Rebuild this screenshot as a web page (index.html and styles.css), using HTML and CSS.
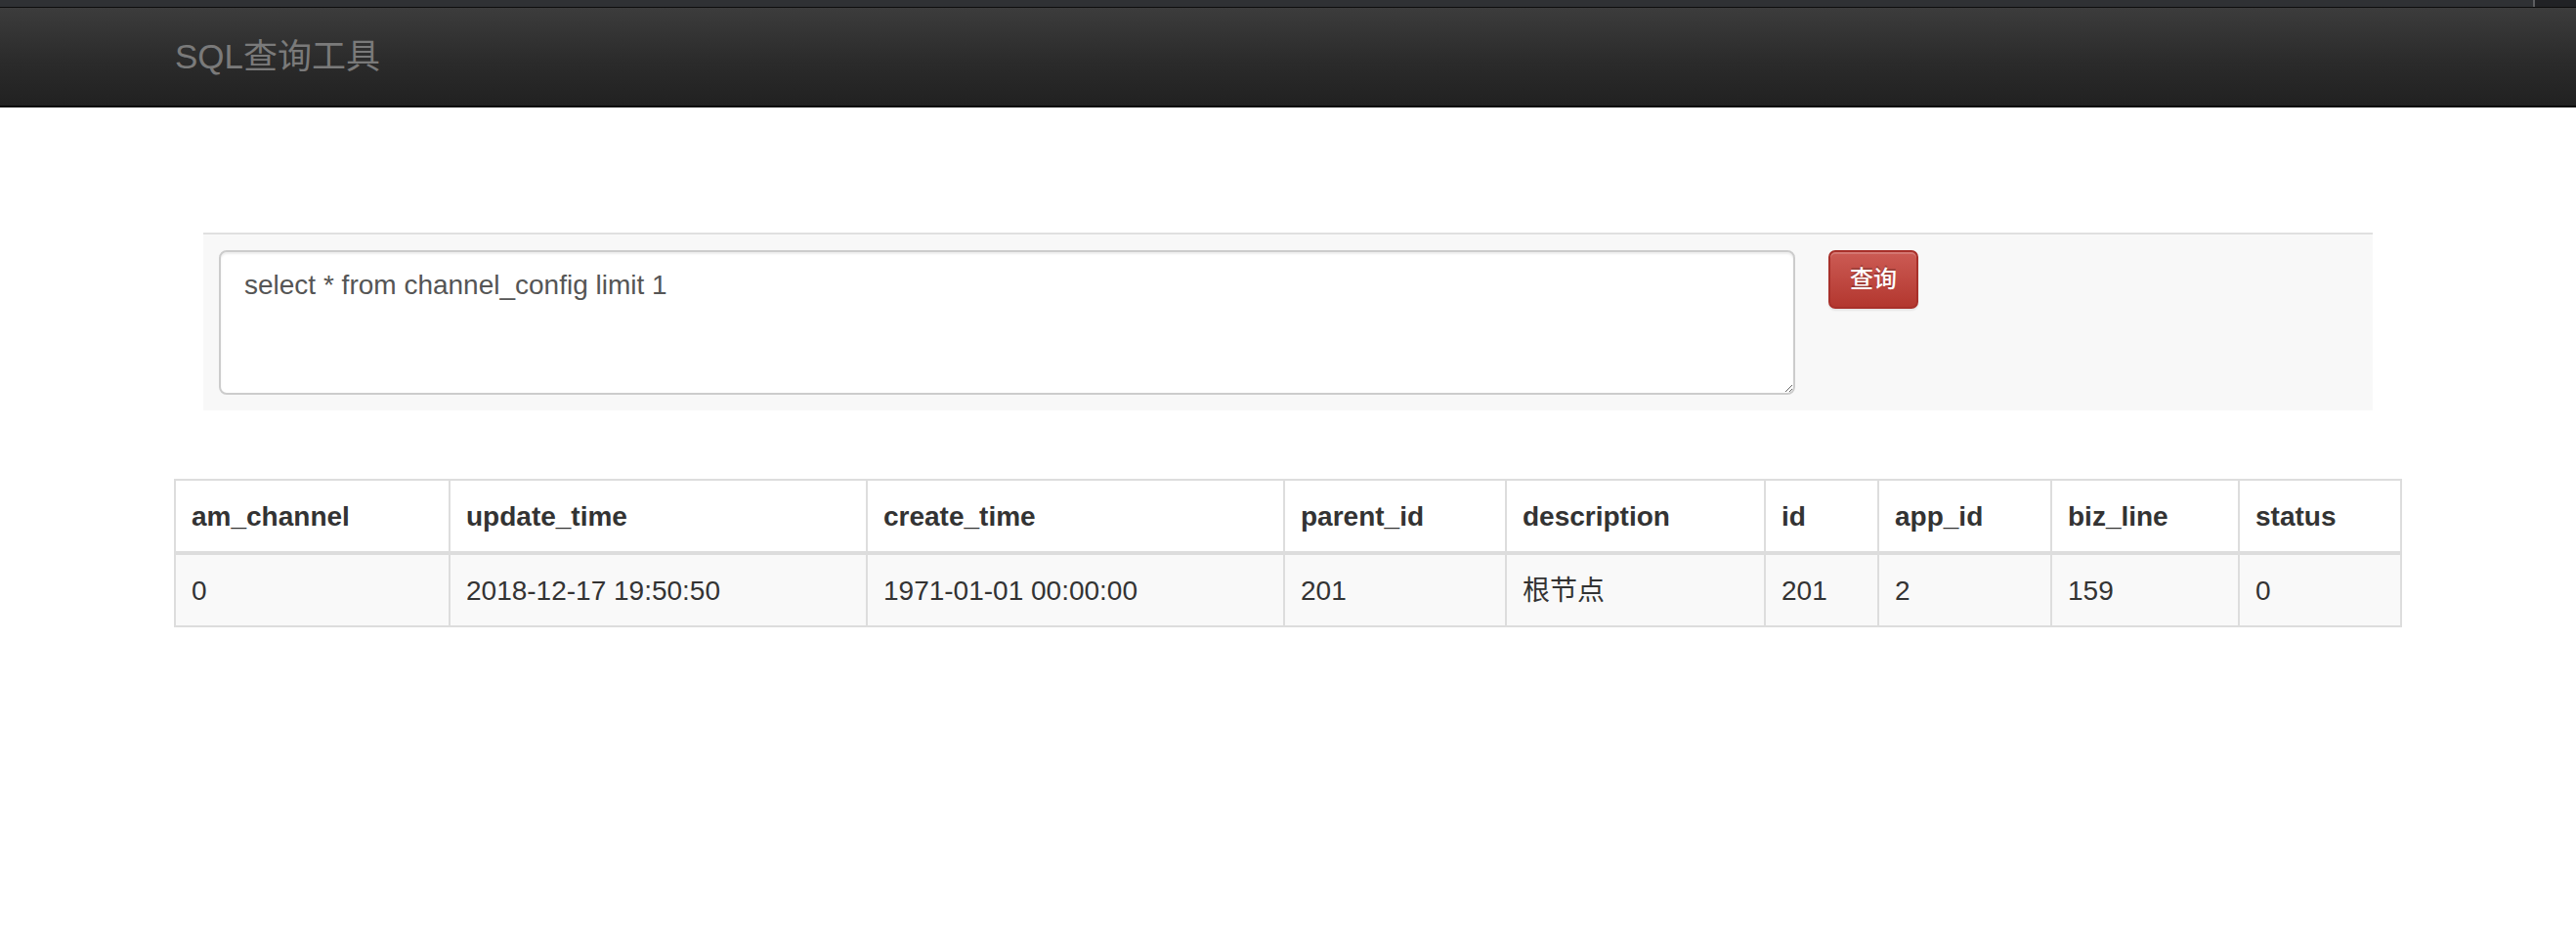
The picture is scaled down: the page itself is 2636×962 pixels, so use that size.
FILE: index.html
```html
<!DOCTYPE html>
<html lang="zh-CN">
<head>
<meta charset="utf-8">
<title>SQL查询工具</title>
<link rel="stylesheet" href="styles.css">
</head>
<body>
<div class="topstrip">
  <div class="topstrip-main"></div>
  <div class="topstrip-divider"></div>
  <div class="topstrip-side"></div>
</div>
<header class="navbar">
  <div class="container">
    <span class="brand">SQL查询工具</span>
  </div>
</header>
<main class="container page">
  <form class="query-panel">
    <textarea class="query-input">select * from channel_config limit 1</textarea>
    <button type="button" class="btn-query">查询</button>
  </form>
  <table class="result-table">
    <thead>
      <tr>
        <th>am_channel</th>
        <th>update_time</th>
        <th>create_time</th>
        <th>parent_id</th>
        <th>description</th>
        <th>id</th>
        <th>app_id</th>
        <th>biz_line</th>
        <th>status</th>
      </tr>
    </thead>
    <tbody>
      <tr>
        <td>0</td>
        <td>2018-12-17 19:50:50</td>
        <td>1971-01-01 00:00:00</td>
        <td>201</td>
        <td>根节点</td>
        <td>201</td>
        <td>2</td>
        <td>159</td>
        <td>0</td>
      </tr>
    </tbody>
  </table>
</main>
</body>
</html>
```

FILE: styles.css
```css
* { box-sizing: border-box; }

html, body {
  margin: 0;
  padding: 0;
  background: #ffffff;
  font-family: "Liberation Sans", "Noto Sans CJK SC", Arial, sans-serif;
  color: #333333;
}

.topstrip {
  display: flex;
  height: 8px;
  border-bottom: 1px solid #0d0d0d;
  background: #2f3134;
}
.topstrip-main { flex: 1; }
.topstrip-divider { width: 2px; background: #5c5d60; }
.topstrip-side { width: 42px; background: #212225; }

.navbar {
  height: 102px;
  background: linear-gradient(to bottom, #3c3c3c 0%, #2b2b2b 55%, #212121 100%);
  border-bottom: 2px solid #0a0a0a;
}

.container {
  width: 2280px;
  margin: 0 auto;
}

.brand {
  display: block;
  padding-left: 1px;
  padding-top: 1px;
  font-size: 35px;
  line-height: 98px;
  color: #7a7a7a;
  font-family: "Liberation Sans", "Noto Sans CJK SC", Arial, sans-serif;
}

.page {
  padding-top: 128px;
}

.query-panel {
  display: flex;
  align-items: flex-start;
  gap: 34px;
  margin: 0 30px 70px;
  padding: 16px;
  background: #f8f8f8;
  border-top: 2px solid #e0e0e0;
}

.query-input {
  display: block;
  width: 1613px;
  height: 148px;
  margin: 0;
  padding: 14px 24px 10px;
  font-family: "Liberation Sans", "Noto Sans CJK SC", Arial, sans-serif;
  font-size: 28px;
  line-height: 40px;
  color: #555555;
  background: #ffffff;
  border: 2px solid #cccccc;
  border-radius: 8px;
  box-shadow: inset 0 2px 2px rgba(0, 0, 0, 0.075);
  resize: vertical;
  outline: none;
}

.btn-query {
  width: 92px;
  height: 60px;
  padding: 0;
  font-family: "Liberation Sans", "Noto Sans CJK SC", Arial, sans-serif;
  font-size: 24px;
  font-weight: 500;
  line-height: 36px;
  color: #ffffff;
  text-shadow: 0 -2px 0 rgba(0, 0, 0, 0.2);
  background: linear-gradient(to bottom, #cc5b54 0%, #b3372f 100%);
  border: 2px solid #a8302a;
  border-radius: 7px;
  box-shadow: inset 0 2px 0 rgba(255, 255, 255, 0.18), 0 2px 2px rgba(0, 0, 0, 0.08);
  cursor: pointer;
}

.result-table {
  width: 2280px;
  table-layout: fixed;
  border-collapse: separate;
  border-spacing: 0;
  border: 2px solid #dddddd;
  font-size: 28px;
  line-height: 40px;
}

.result-table th,
.result-table td {
  padding: 17px 16px 15px;
  text-align: left;
  border-left: 2px solid #dddddd;
  white-space: nowrap;
  overflow: hidden;
}
.result-table th:first-child,
.result-table td:first-child { border-left: 0; }

.result-table th {
  font-weight: bold;
  vertical-align: bottom;
  border-bottom: 4px solid #dddddd;
  color: #333333;
}

.result-table tbody tr:nth-child(odd) td {
  background: #f9f9f9;
}

.result-table th:nth-child(1) { width: 279px; }
.result-table th:nth-child(2) { width: 427px; }
.result-table th:nth-child(3) { width: 427px; }
.result-table th:nth-child(4) { width: 227px; }
.result-table th:nth-child(5) { width: 265px; }
.result-table th:nth-child(6) { width: 116px; }
.result-table th:nth-child(7) { width: 177px; }
.result-table th:nth-child(8) { width: 192px; }
.result-table th:nth-child(9) { width: 166px; }
```
